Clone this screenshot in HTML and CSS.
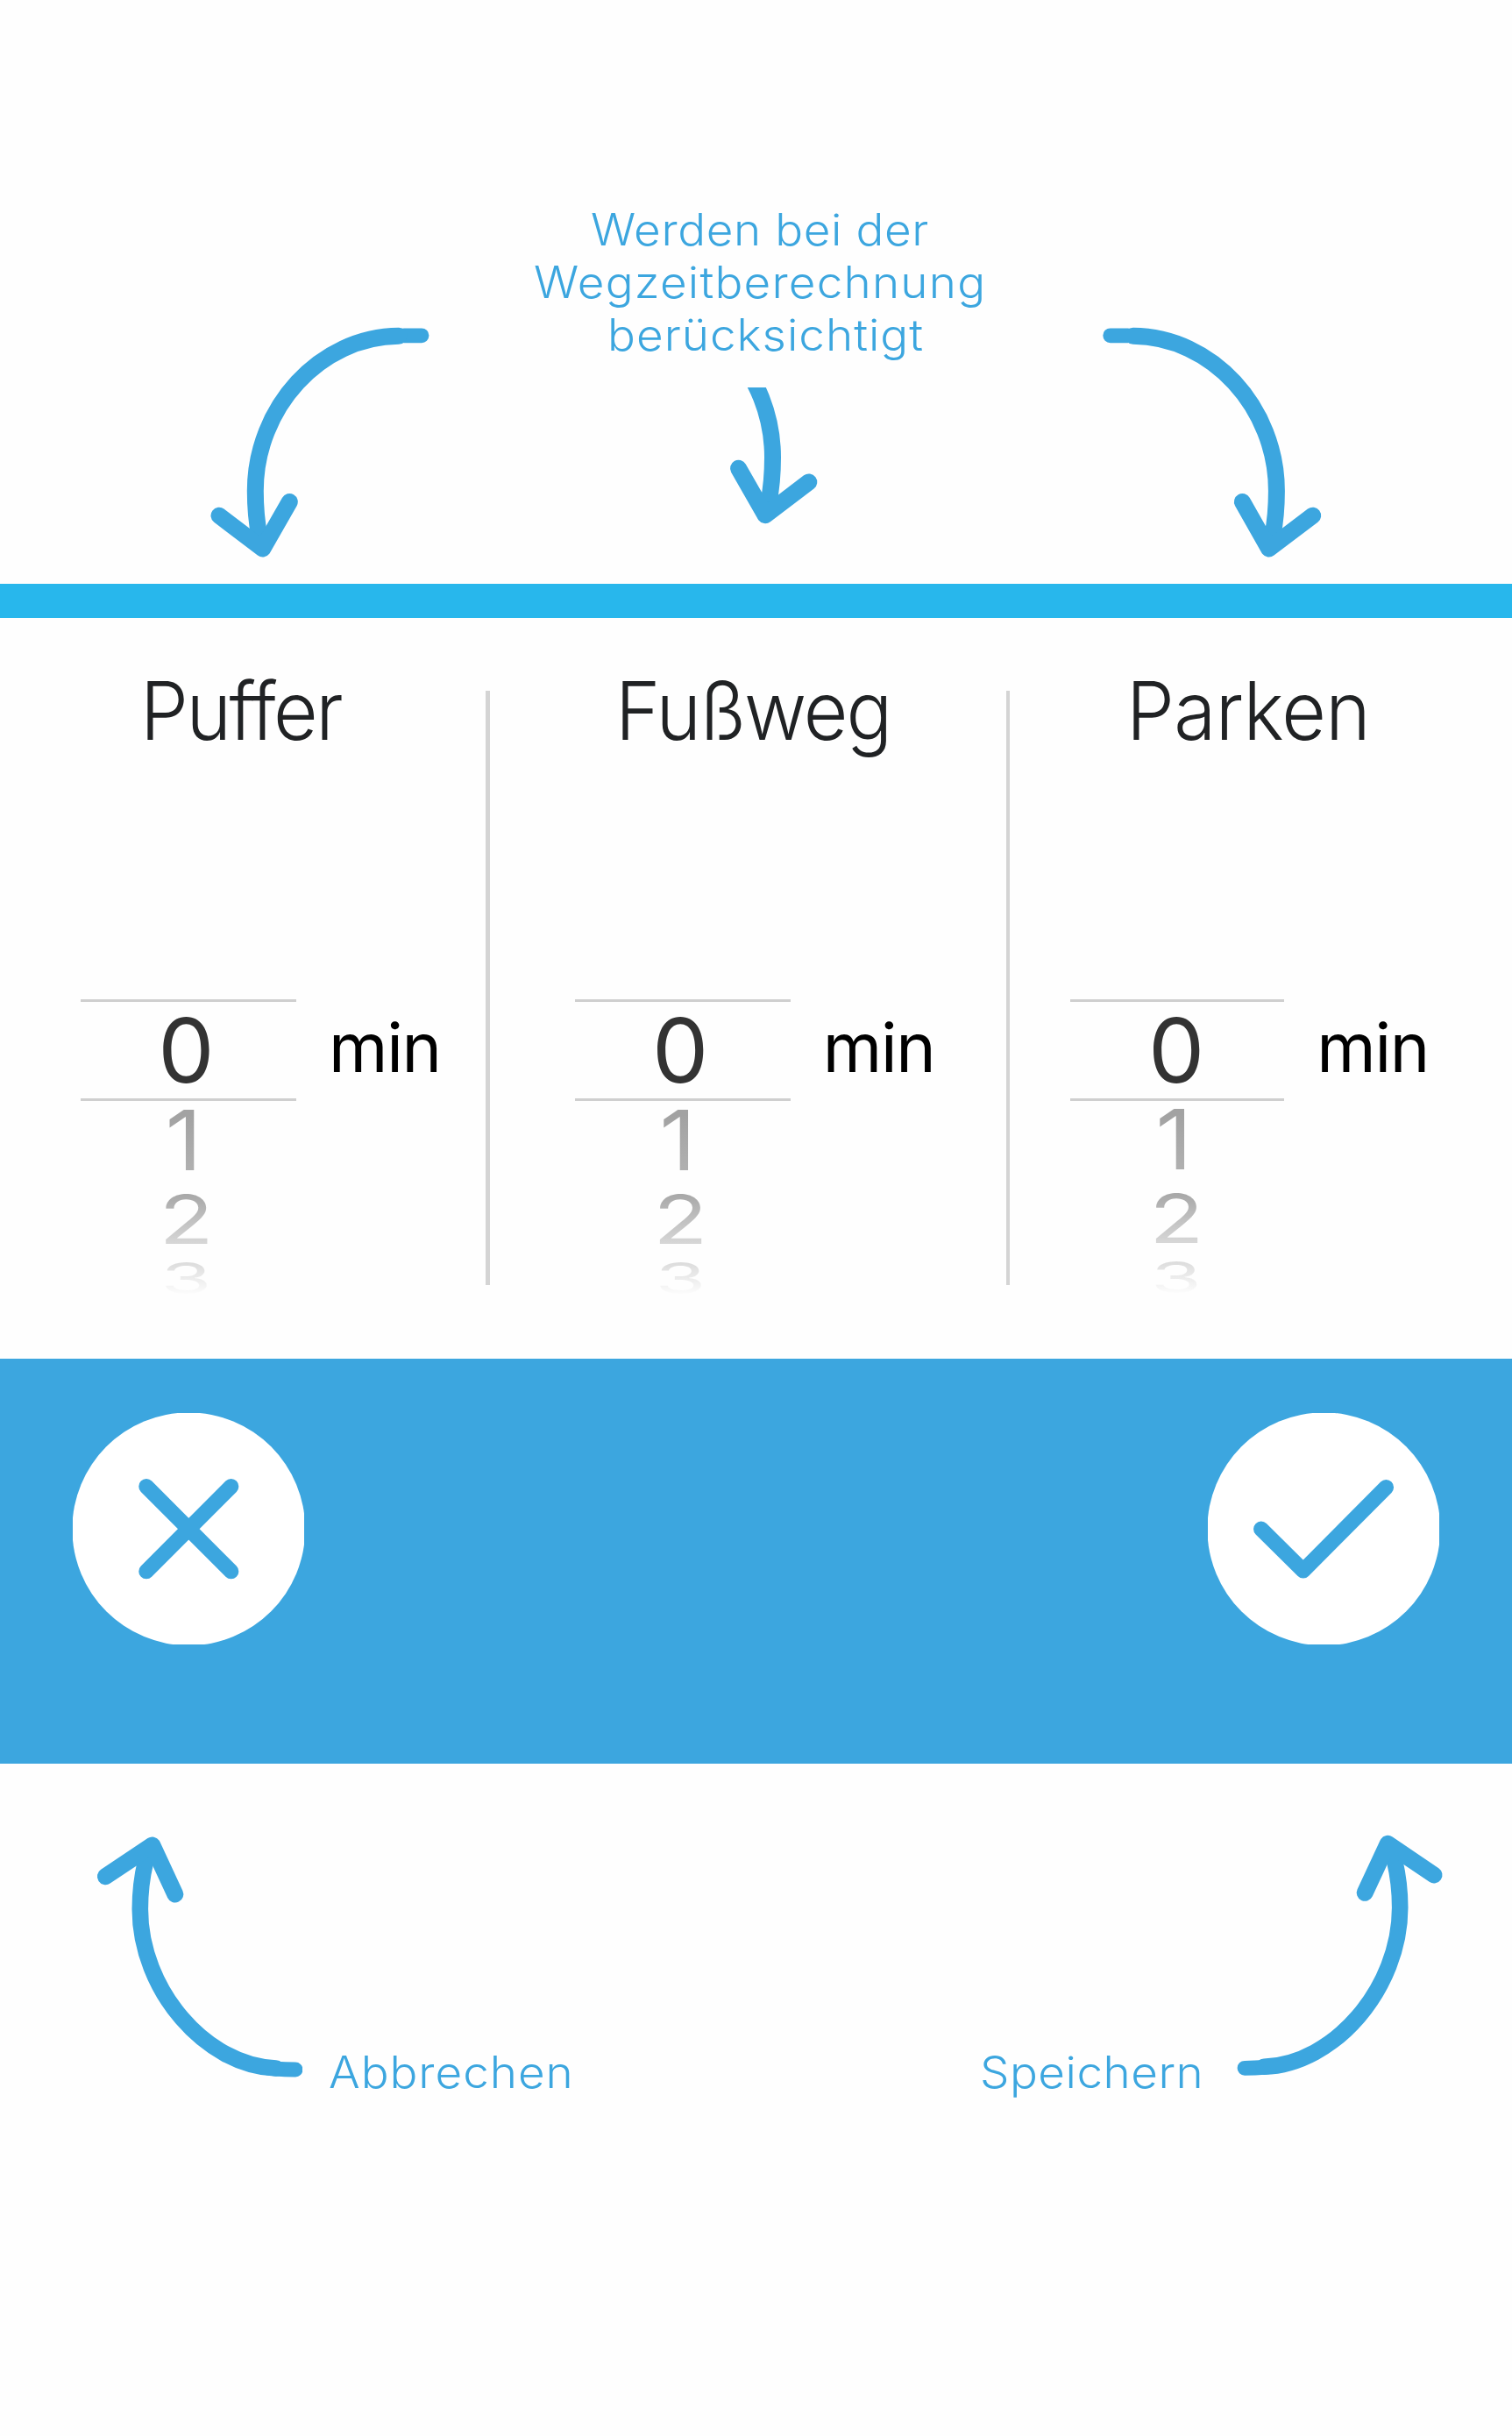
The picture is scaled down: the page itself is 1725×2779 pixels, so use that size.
FILE: index.html
```html
<!DOCTYPE html>
<html lang="de">
<head>
<meta charset="utf-8">
<title>Wegzeitberechnung</title>
<link rel="stylesheet" href="styles.css">
</head>
<body>
<section class="notes-top">
  <svg class="arrow arrow-side" viewBox="220 350 300 300">
    <path class="tail" d="M481 382.8H461"/>
    <path class="shaft" d="M455 383.3C365 384 291.3 465 291.3 560Q291.3 588 296 612"/>
    <path class="head" d="M250 588.2L299.7 626L330.3 572.5"/>
  </svg>
  <div class="notes-mid">
    <p class="note note-1">Werden bei der</p>
    <p class="note note-2">Wegzeitberechnung</p>
    <p class="note note-3">berücksichtigt</p>
    <svg class="arrow arrow-mid" viewBox="820 442.3 120 160">
      <path class="shaft" d="M718 345.3C808.2 346 881.5 427 881.5 522Q881.5 550 876.8 574"/>
      <path class="head" d="M922.8 550.2L873.1 588L842.5 534.5"/>
    </svg>
  </div>
  <svg class="arrow arrow-side" viewBox="1230 350 300 300">
    <path class="tail" d="M1266.7 382.8H1286.7"/>
    <path class="shaft" d="M1292.7 383.3C1382.7 384 1456.4 465 1456.4 560Q1456.4 588 1451.7 612"/>
    <path class="head" d="M1497.7 588.2L1447.7 626L1417.4 572.5"/>
  </svg>
</section>

<main class="panel">
  <section class="column column-1">
    <h2 class="title title-puffer">Puffer</h2>
    <div class="picker">
      <div class="wheel">
        <div class="digit d0">0</div>
        <div class="digit d1"><span>1</span></div>
        <div class="digit d2"><span>2</span></div>
        <div class="digit d3"><span>3</span></div>
      </div>
      <div class="unit">min</div>
    </div>
  </section>
  <div class="divider"></div>
  <section class="column column-2">
    <h2 class="title title-fussweg">Fußweg</h2>
    <div class="picker">
      <div class="wheel">
        <div class="digit d0">0</div>
        <div class="digit d1"><span>1</span></div>
        <div class="digit d2"><span>2</span></div>
        <div class="digit d3"><span>3</span></div>
      </div>
      <div class="unit">min</div>
    </div>
  </section>
  <div class="divider"></div>
  <section class="column column-3">
    <h2 class="title title-parken">Parken</h2>
    <div class="picker">
      <div class="wheel">
        <div class="digit d0">0</div>
        <div class="digit d1"><span>1</span></div>
        <div class="digit d2"><span>2</span></div>
        <div class="digit d3"><span>3</span></div>
      </div>
      <div class="unit">min</div>
    </div>
  </section>
</main>

<nav class="actions">
  <svg class="action" viewBox="-132.2 -132.2 264.4 264.4">
    <circle class="disc" r="132.8"/>
    <path class="mark" d="M-48.3 -48.5L48.3 48.3M48.3 -48.5L-48.3 48.3"/>
  </svg>
  <svg class="action" viewBox="-132.2 -132.2 264.4 264.4">
    <circle class="disc" r="132.8"/>
    <path class="mark" d="M-71.5 0L-23.5 47.5L71 -47.5"/>
  </svg>
</nav>

<section class="notes-bottom">
  <svg class="arrow arrow-up" viewBox="90 2080 255 300">
    <path class="tail" d="M337 2361C325 2361 308 2360 297 2357.5"/>
    <path class="curve" d="M315 2359.5C235 2357 159.8 2270 159.8 2178Q159.8 2150 166 2124"/>
    <path class="head" d="M120.4 2140.7L173.8 2105L199.8 2161"/>
  </svg>
  <p class="note note-cancel">Abbrechen</p>
  <p class="note note-save">Speichern</p>
  <svg class="arrow arrow-up" viewBox="1405 2080 255 300">
    <path class="tail" d="M1420 2359.3C1432 2359.3 1449 2358.3 1460 2355.8"/>
    <path class="curve" d="M1442 2357.8C1522 2355.3 1597.2 2268.3 1597.2 2176.3Q1597.2 2148.3 1591 2122.3"/>
    <path class="head" d="M1636 2139L1583.3 2103.3L1557.2 2159.3"/>
  </svg>
</section>
</body>
</html>
```
FILE: styles.css
```css
* {
  box-sizing: border-box;
}

body {
  margin: 0;
  width: 1725px;
  height: 2779px;
  overflow: hidden;
  background: #fefefe;
  font-family: Inter, "Liberation Sans", sans-serif;
}

h2,
p {
  margin: 0;
}

/* Annotation texts and arrows */
.note {
  font-size: 50px;
  font-weight: 300;
  line-height: 60px;
  color: #3ca6df;
  white-space: nowrap;
  transform: scaleX(1.06);
  transform-origin: left;
}

.arrow {
  display: block;
  flex: none;
  fill: none;
  stroke: #3ca6df;
  stroke-linecap: round;
  stroke-linejoin: round;
}

.tail {
  stroke-width: 16.8px;
}

.shaft {
  stroke-width: 19px;
}

.curve {
  stroke-width: 18.6px;
}

.head {
  stroke-width: 19px;
}

.notes-top {
  display: flex;
  height: 666.3px;
  padding-left: 220px;
}

.arrow-side {
  width: 300px;
  height: 300px;
  margin-top: 350px;
}

.notes-mid {
  width: 710px;
  padding-top: 231.8px;
}

.note-1 {
  margin-left: 154px;
  letter-spacing: 0.55px;
}

.note-2 {
  margin-left: 89px;
  letter-spacing: 1.13px;
}

.note-3 {
  margin-left: 172.6px;
  letter-spacing: 0.95px;
}

.arrow-mid {
  width: 120px;
  height: 160px;
  margin: 30.5px 0 0 300px;
}

/* Time pickers */
.panel {
  display: flex;
  height: 883.4px;
  border-top: 39.3px solid #28b7ec;
}

.column {
  padding-top: 55.8px;
}

.column-1 {
  width: 554.3px;
  padding-left: 92px;
}

.column-2 {
  width: 589.2px;
  padding-left: 97px;
}

.column-3 {
  width: 572.5px;
  padding-left: 68.8px;
}

.divider {
  width: 4.5px;
  height: 678.4px;
  margin-top: 82.7px;
  background: #d4d4d4;
}

.title {
  font-size: 92px;
  font-weight: 300;
  line-height: 100px;
  color: #202224;
  white-space: nowrap;
  transform: scaleX(0.95);
  transform-origin: left;
}

.title-puffer {
  margin-left: 68px;
  letter-spacing: -2.6px;
}

.title-fussweg {
  margin-left: 46.4px;
  letter-spacing: -2px;
}

.title-parken {
  margin-left: 63.5px;
  letter-spacing: -0.6px;
}

.picker {
  display: flex;
  gap: 37px;
  margin-top: 278.6px;
}

.wheel {
  width: 246px;
}

.column-3 .wheel {
  width: 244px;
}

.digit {
  height: 90px;
  padding-right: 5px;
  font-size: 102px;
  line-height: 90px;
  text-align: center;
  color: #333;
}

.digit span {
  display: inline-block;
}

.d0 {
  height: 116px;
  line-height: 110px;
  border: solid #cfcfcf;
  border-width: 3px 0;
}

.column-3 .d0 {
  padding-right: 2px;
}

.d1 {
  padding-right: 11px;
}

.d1 span {
  color: transparent;
  background: linear-gradient(#a2a2a2 15%, #afafaf 85%) text;
  transform: scaleY(0.93);
}

.d2 span {
  color: transparent;
  background: linear-gradient(#a9a9a9 10%, #d6d6d6 90%) text;
  transform: scaleY(0.75);
}

.d3 {
  height: 44px;
  line-height: 44px;
}

.d3 span {
  line-height: 90px;
  margin: -23px 0;
  color: transparent;
  background: linear-gradient(#dcdcdc 10%, #fcfcfc 90%) text;
  transform: scale(0.92, 0.48);
}

.column-3 .d1,
.column-3 .d2,
.column-3 .d3 {
  transform: translate(1.5px, -1px);
}

.unit {
  height: 110px;
  font-size: 77px;
  line-height: 110px;
  letter-spacing: -1.3px;
  color: #000;
}

/* Cancel and save buttons */
.actions {
  display: flex;
  justify-content: space-between;
  height: 462.6px;
  padding: 62px 82.6px 0;
  background: #3ca6df;
}

.action {
  display: block;
  width: 264.6px;
  height: 264.6px;
}

.disc {
  fill: #fff;
}

.mark {
  fill: none;
  stroke: #3ca6df;
  stroke-width: 17.4px;
  stroke-linecap: round;
  stroke-linejoin: round;
}

.notes-bottom {
  display: flex;
  padding: 67.7px 0 0 90px;
}

.arrow-up {
  width: 255px;
  height: 300px;
}

.notes-bottom .note {
  margin-top: 253.8px;
}

.note-cancel {
  width: 270px;
  margin: 0 473.7px 0 29.5px;
  letter-spacing: 0.9px;
}

.note-save {
  width: 260px;
  margin-right: 26.8px;
  letter-spacing: 0.45px;
}
```
